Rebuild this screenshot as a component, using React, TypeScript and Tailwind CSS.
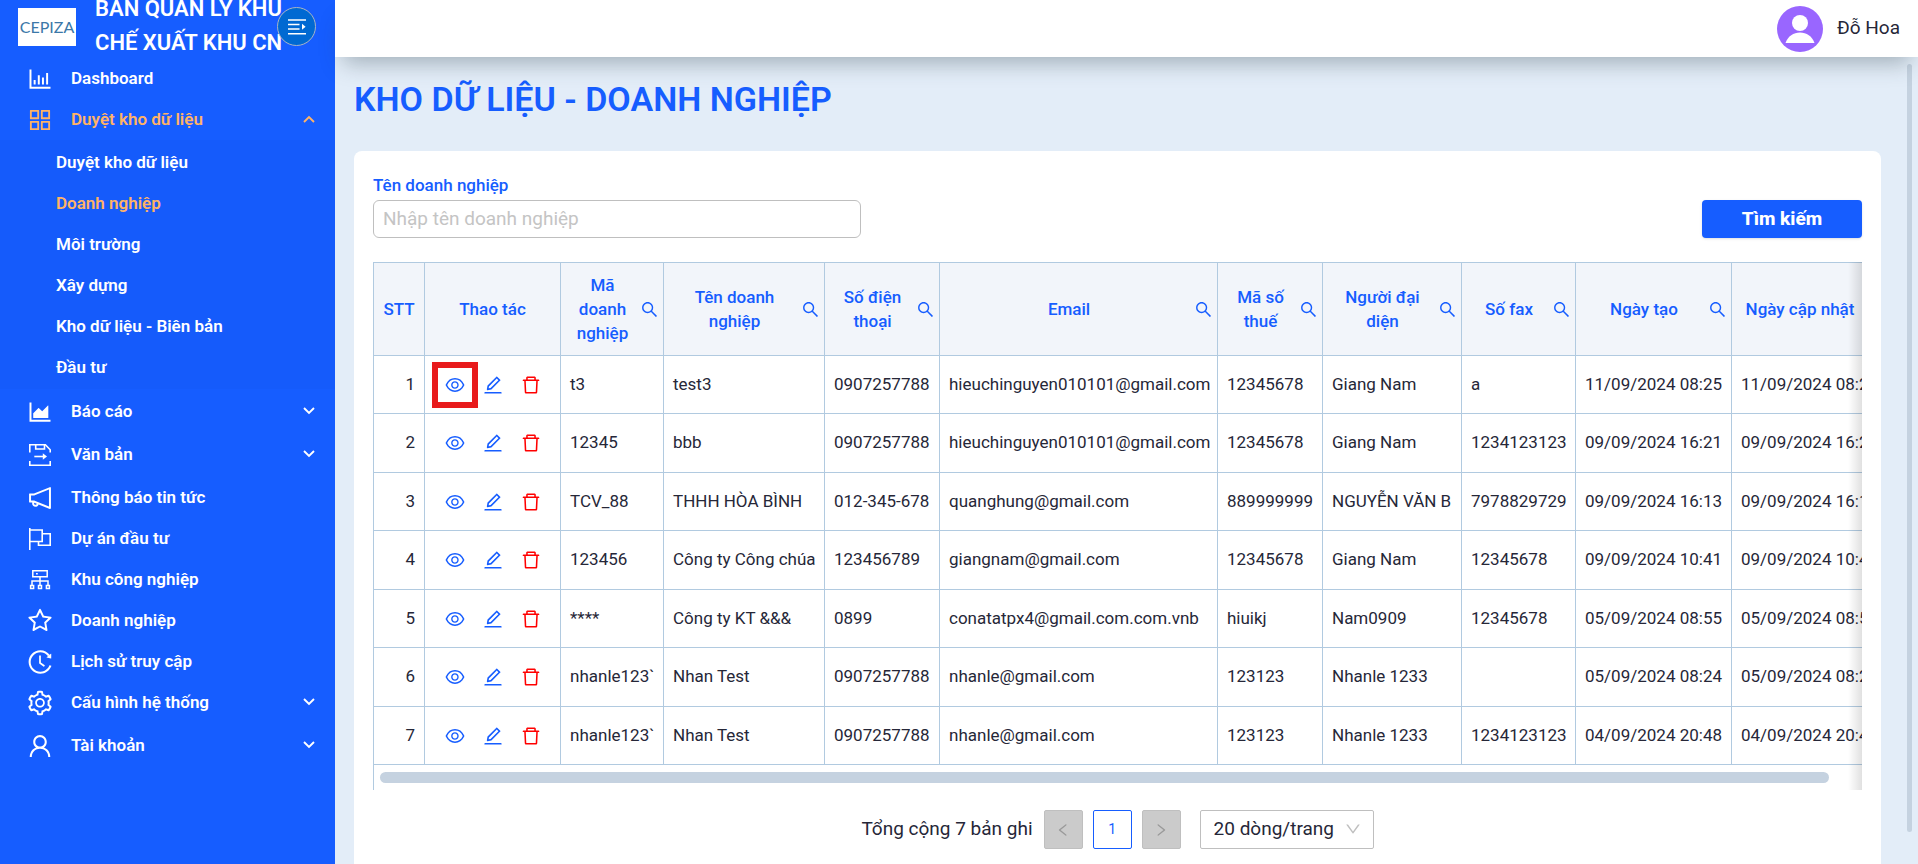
import React from "react";
import {
  AiOutlineAppstore,
  AiOutlineAreaChart,
  AiOutlineBarChart,
  AiOutlineDelete,
  AiOutlineEdit,
  AiOutlineEye,
  AiOutlineHistory,
  AiOutlineLeft,
  AiOutlineDown,
  AiOutlineNotification,
  AiOutlineRight,
  AiOutlineSearch,
  AiOutlineSetting,
  AiOutlineStar,
  AiOutlineUser,
} from "react-icons/ai";

type IconProps = { className?: string };

function SaveMoveIcon({ className }: IconProps) {
  return (
    <svg viewBox="-3 -3 28 28" className={className} fill="none" stroke="currentColor" strokeWidth="1.6">
      <path d="M.8 8.5V.8h15.6l4.8 5v2.7" />
      <path d="M6.7 1v4h8.8V1" />
      <path d="M5.3 12.5h9.5" />
      <path d="M13.8 9.3l4.2 3.2-4.2 3.2z" fill="currentColor" stroke="none" />
      <path d="M.8 17v4.2h20.4V17" />
    </svg>
  );
}

function FlagIcon({ className }: IconProps) {
  return (
    <svg viewBox="-3 -3 28 28" className={className} fill="none" stroke="currentColor" strokeWidth="1.6">
      <path d="M.8 0v22" />
      <path d="M.8 2h12.4v11.5H.8" />
      <path d="M13.2 5.8h8v11.4H9.5v-3.7" />
    </svg>
  );
}

function NetworkIcon({ className }: IconProps) {
  return (
    <svg viewBox="-3 -3 28 28" className={className} fill="none" stroke="currentColor" strokeWidth="1.5">
      <path d="M3.8 1.8h14.4v6H3.8z" />
      <path d="M7 4.8h1.8M11 8v8M3 16v-4h16v4" />
      <path d="M1.6 16.6h3v3h-3zM9.5 16.6h3v3h-3zM17.4 16.6h3v3h-3z" />
    </svg>
  );
}

function Chevron({ up }: { up?: boolean }) {
  return (
    <svg viewBox="0 0 12 8" className="mb-0.5 h-2 w-3" fill="none" stroke="currentColor" strokeWidth="1.9">
      <path d={up ? "M1 7l5-5 5 5" : "M1 1l5 5 5-5"} />
    </svg>
  );
}

function Avatar() {
  return (
    <svg viewBox="0 0 46 46" className="size-[46px]" aria-hidden="true">
      <circle cx="23" cy="23" r="23" fill="#9966ff" />
      <circle cx="23" cy="17" r="8" fill="#fff" />
      <path d="M8.5 37C11 30 16.5 26.5 23 26.5S35 30 37.5 37z" fill="#fff" />
    </svg>
  );
}

type MenuEntry = {
  label: string;
  icon: React.ComponentType<IconProps>;
  children?: string[];
  open?: boolean;
  parent?: boolean;
};

const menu: MenuEntry[] = [
  { label: "Dashboard", icon: AiOutlineBarChart },
  {
    label: "Duyệt kho dữ liệu",
    icon: AiOutlineAppstore,
    parent: true,
    open: true,
    children: ["Duyệt kho dữ liệu", "Doanh nghiệp", "Môi trường", "Xây dựng", "Kho dữ liệu - Biên bản", "Đầu tư"],
  },
  { label: "Báo cáo", icon: AiOutlineAreaChart, parent: true },
  { label: "Văn bản", icon: SaveMoveIcon, parent: true },
  { label: "Thông báo tin tức", icon: AiOutlineNotification },
  { label: "Dự án đầu tư", icon: FlagIcon },
  { label: "Khu công nghiệp", icon: NetworkIcon },
  { label: "Doanh nghiệp", icon: AiOutlineStar },
  { label: "Lịch sử truy cập", icon: AiOutlineHistory },
  { label: "Cấu hình hệ thống", icon: AiOutlineSetting, parent: true },
  { label: "Tài khoản", icon: AiOutlineUser, parent: true },
];

const columns = [
  { title: "STT", width: "w-[51px]", search: false },
  { title: "Thao tác", width: "w-[136px]", search: false },
  { title: "Mã doanh nghiệp", width: "w-[103px]", search: true },
  { title: "Tên doanh nghiệp", width: "w-[161px]", search: true },
  { title: "Số điện thoại", width: "w-[115px]", search: true },
  { title: "Email", width: "w-[278px]", search: true },
  { title: "Mã số thuế", width: "w-[105px]", search: true },
  { title: "Người đại diện", width: "w-[139px]", search: true },
  { title: "Số fax", width: "w-[114px]", search: true },
  { title: "Ngày tạo", width: "w-[156px]", search: true },
  { title: "Ngày cập nhật", width: "w-[156px]", search: true },
];

const rows = [
  ["t3", "test3", "0907257788", "hieuchinguyen010101@gmail.com", "12345678", "Giang Nam", "a", "11/09/2024 08:25", "11/09/2024 08:25"],
  ["12345", "bbb", "0907257788", "hieuchinguyen010101@gmail.com", "12345678", "Giang Nam", "1234123123", "09/09/2024 16:21", "09/09/2024 16:21"],
  ["TCV_88", "THHH HÒA BÌNH", "012-345-678", "quanghung@gmail.com", "889999999", "NGUYỄN VĂN B", "7978829729", "09/09/2024 16:13", "09/09/2024 16:13"],
  ["123456", "Công ty Công chúa", "123456789", "giangnam@gmail.com", "12345678", "Giang Nam", "12345678", "09/09/2024 10:41", "09/09/2024 10:41"],
  ["****", "Công ty KT &&&", "0899", "conatatpx4@gmail.com.com.vnb", "hiuikj", "Nam0909", "12345678", "05/09/2024 08:55", "05/09/2024 08:55"],
  ["nhanle123`", "Nhan Test", "0907257788", "nhanle@gmail.com", "123123", "Nhanle 1233", "", "05/09/2024 08:24", "05/09/2024 08:24"],
  ["nhanle123`", "Nhan Test", "0907257788", "nhanle@gmail.com", "123123", "Nhanle 1233", "1234123123", "04/09/2024 20:48", "04/09/2024 20:48"],
];

function Sidebar() {
  return (
    <aside className="relative flex w-[335px] shrink-0 flex-col overflow-hidden bg-[#165dff] text-white">
      <div className="flex h-[58px] shrink-0 items-center pl-[18px]">
        <div className="mb-1 flex h-[38px] w-[58px] shrink-0 items-center justify-center bg-white">
          <span className="font-[Lato,sans-serif] text-[16px] text-[#3b78a8]">CEPIZA</span>
        </div>
        <p className="-mt-1.5 ml-[19px] text-[22px] leading-[34px] font-semibold whitespace-nowrap">
          BAN QUẢN LÝ KHU
          <br />
          CHẾ XUẤT KHU CN
        </p>
      </div>
      <button
        type="button"
        aria-label="Thu gọn menu"
        className="absolute top-[7px] left-[277px] flex size-[39px] items-center justify-center rounded-full border border-[#a9b4c4] bg-[#0069d2]"
      >
        <svg viewBox="0 0 18 16" className="h-4 w-[18px]" fill="none" stroke="currentColor" strokeWidth="1.5">
          <path d="M0 1h18M0 5.5h11.5M0 10h11.5M0 14.8h18" />
          <path d="M14 4.8l3.6 3-3.6 3z" fill="currentColor" stroke="none" />
        </svg>
      </button>
      <nav aria-label="Menu chính">
        <ul>
          {menu.map(({ label, icon: Icon, children, open, parent }) => (
            <li key={label} className={parent ? "mb-0.5" : ""}>
              <a
                href="#"
                aria-expanded={parent ? !!open : undefined}
                className={`flex h-[41px] items-center pr-5 pl-[26px] text-[17px] font-semibold ${open ? "text-[#ffb366]" : ""}`}
              >
                <Icon className="size-7 shrink-0" />
                <span className="ml-[17px] flex-1">{label}</span>
                {parent && <Chevron up={open} />}
              </a>
              {children && (
                <ul className="bg-[#155bfb] pt-0.5 pb-px">
                  {children.map((child) => (
                    <li key={child}>
                      <a
                        href="#"
                        className={`flex h-[41px] items-center pl-14 text-[17px] font-semibold ${child === "Doanh nghiệp" ? "text-[#ffb366]" : ""}`}
                      >
                        {child}
                      </a>
                    </li>
                  ))}
                </ul>
              )}
            </li>
          ))}
        </ul>
      </nav>
    </aside>
  );
}

function DataTable() {
  return (
    <div className="relative mt-6 overflow-hidden border-l border-[#b1cae0]">
      <div className="overflow-hidden">
        <table className="w-full min-w-[1514px] table-fixed border-separate border-spacing-0 border-t border-[#b1cae0] text-[17px]">
          <colgroup>
            {columns.map((c) => (
              <col key={c.title} className={c.width} />
            ))}
          </colgroup>
          <thead>
            <tr className="h-[93px] bg-[#f2f5fa] text-[#165dff]">
              {columns.map((c) => (
                <th key={c.title} scope="col" className="border-r border-b border-[#b1cae0] p-0 leading-6 font-medium">
                  {c.search ? (
                    <div className="flex items-center pr-1 pl-2">
                      <span className="flex-1">{c.title}</span>
                      <button type="button" aria-label={`Tìm ${c.title}`} className="ml-1 shrink-0">
                        <AiOutlineSearch className="size-[19px]" />
                      </button>
                    </div>
                  ) : (
                    c.title
                  )}
                </th>
              ))}
            </tr>
          </thead>
          <tbody className="text-[#262738]">
            {rows.map((row, i) => (
              <tr key={i} className="h-[58px] even:h-[59px]">
                <td className="border-r border-b border-[#b1cae0] px-[9px] py-0 text-right">{i + 1}</td>
                <td className="border-r border-b border-[#b1cae0] p-0">
                  <div className="flex items-center pl-[7px]">
                    <button
                      type="button"
                      aria-label="Xem"
                      className={`flex size-[46px] items-center justify-center border-6 text-[#165dff] ${i === 0 ? "border-[#e81a1c]" : "border-transparent"}`}
                    >
                      <AiOutlineEye className="size-[22px]" />
                    </button>
                    <button type="button" aria-label="Sửa" className="ml-1 text-[#165dff]">
                      <AiOutlineEdit className="size-[22px]" />
                    </button>
                    <button type="button" aria-label="Xóa" className="ml-4 text-[#ff0000]">
                      <AiOutlineDelete className="size-[22px]" />
                    </button>
                  </div>
                </td>
                {row.map((cell, j) => (
                  <td key={j} className="overflow-hidden border-r border-b border-[#b1cae0] py-0 pr-2 pl-[9px] whitespace-nowrap">
                    {cell}
                  </td>
                ))}
              </tr>
            ))}
          </tbody>
        </table>
      </div>
      <div className="pt-[7px] pr-[33px] pb-[7px] pl-1.5">
        <div className="h-[11px] rounded-full bg-[#c5d2e0]" />
      </div>
      <div className="pointer-events-none absolute inset-y-0 right-0 w-3.5 bg-linear-to-l from-black/12 to-transparent" />
    </div>
  );
}

function Pagination() {
  return (
    <div className="mt-5 flex items-center justify-center text-[19px] text-[#262738]">
      <span className="mr-[11px]">Tổng cộng 7 bản ghi</span>
      <button
        type="button"
        disabled
        aria-label="Trang trước"
        className="flex size-[39px] items-center justify-center rounded-xs border border-[#bfbfbf] bg-[#cbcbcb] text-[#999]"
      >
        <AiOutlineLeft className="size-4" />
      </button>
      <button
        type="button"
        aria-current="page"
        className="mx-2.5 size-[39px] rounded-xs border border-[#165dff] bg-white text-[14px] text-[#165dff]"
      >
        1
      </button>
      <button
        type="button"
        disabled
        aria-label="Trang sau"
        className="flex size-[39px] items-center justify-center rounded-xs border border-[#bfbfbf] bg-[#cbcbcb] text-[#999]"
      >
        <AiOutlineRight className="size-4" />
      </button>
      <div className="relative ml-[19px]">
        <select
          aria-label="Số dòng mỗi trang"
          className="h-[39px] w-[174px] appearance-none rounded-xs border border-[#bfbfbf] bg-white pl-[13px]"
        >
          <option>20 dòng/trang</option>
        </select>
        <AiOutlineDown className="pointer-events-none absolute top-2.5 right-3 size-[18px] text-[#bfbfbf]" />
      </div>
    </div>
  );
}

export default function App() {
  return (
    <div className="flex h-screen overflow-hidden bg-[#e3edf8] font-[Roboto,sans-serif]">
      <Sidebar />
      <div className="flex min-w-0 flex-1 flex-col">
        <header className="relative z-10 flex h-[57px] shrink-0 items-center justify-end bg-white pr-[18px] shadow-[0_14px_22px_-8px_rgba(40,60,70,0.35)]">
          <Avatar />
          <span className="ml-3.5 text-[19px] text-[#262738]">Đỗ Hoa</span>
        </header>
        <div className="flex min-h-0 flex-1">
          <main className="flex min-w-0 flex-1 flex-col overflow-hidden pl-[19px]">
            <h1 className="mt-[17px] mb-[27px] text-[34px] leading-[50px] font-semibold text-[#165dff]">KHO DỮ LIỆU - DOANH NGHIỆP</h1>
            <section className="flex-1 rounded-t-lg bg-white px-[19px] pt-[22px]">
              <form className="flex items-end justify-between" onSubmit={(e) => e.preventDefault()}>
                <div className="flex w-[488px] flex-col">
                  <label htmlFor="company" className="mb-[3px] text-[17px] leading-6 font-medium text-[#165dff]">
                    Tên doanh nghiệp
                  </label>
                  <input
                    id="company"
                    type="text"
                    placeholder="Nhập tên doanh nghiệp"
                    className="h-[38px] rounded-md border border-[#bfbfbf] px-[9px] pb-0.5 text-[19px] placeholder:text-[#c4c4c4]"
                  />
                </div>
                <button type="submit" className="h-[38px] w-40 rounded bg-[#165dff] text-[19px] font-extrabold text-white shadow-sm">
                  Tìm kiếm
                </button>
              </form>
              <DataTable />
              <Pagination />
            </section>
          </main>
          <div className="flex w-[37px] shrink-0 justify-end pt-[7px] pr-1.5 pb-8">
            <div className="w-[5px] rounded-full bg-[#c5d2e0]" />
          </div>
        </div>
      </div>
    </div>
  );
}
